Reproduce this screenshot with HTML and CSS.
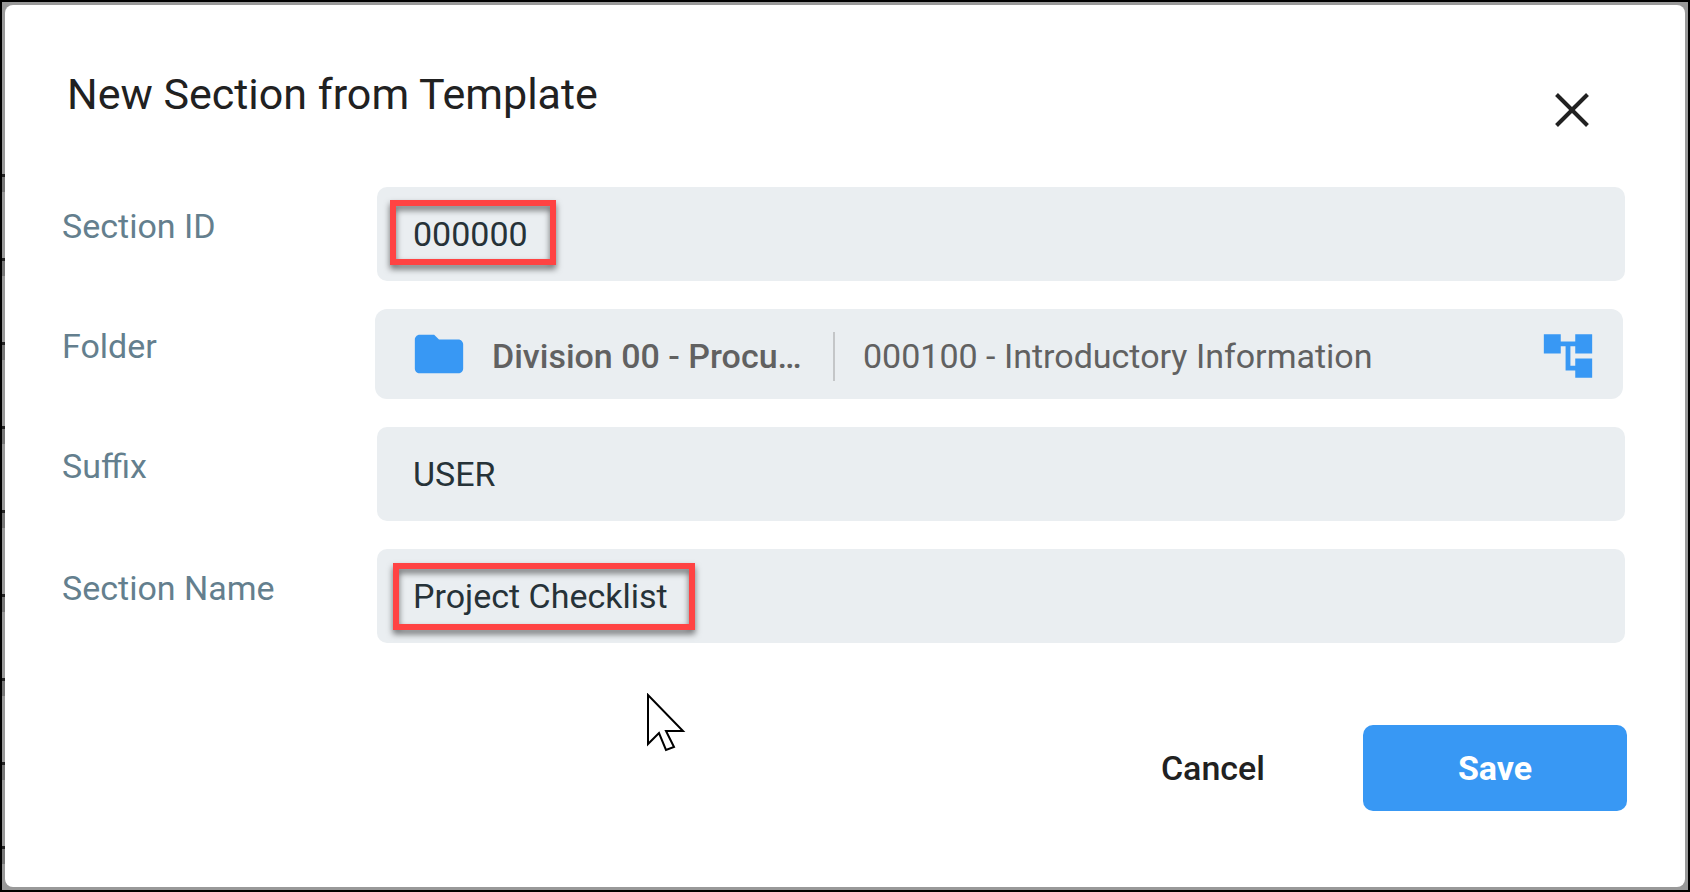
FILE: index.html
```html
<!DOCTYPE html>
<html lang="en">
<head>
<meta charset="utf-8">
<title>New Section from Template</title>
<link rel="stylesheet" href="styles.css">
</head>
<body>
<div class="backdrop">
  <form class="dialog" role="dialog" aria-labelledby="dialog-title">
    <header class="header">
      <h1 class="title" id="dialog-title">New Section from Template</h1>
      <button class="icon-button close" type="button" aria-label="Close">
        <svg class="icon" viewBox="0 0 24 24"><path d="M19 6.19 17.81 5 12 10.81 6.19 5 5 6.19 10.81 12 5 17.81 6.19 19 12 13.19 17.81 19 19 17.81 13.19 12z"/></svg>
      </button>
    </header>

    <div class="rows">
      <div class="row">
        <label class="label" for="section-id">Section ID</label>
        <div class="control">
          <input class="field" id="section-id" type="text" value="000000">
          <span class="highlight highlight-id"></span>
        </div>
      </div>
      <div class="row row-folder">
        <span class="label" id="folder-label">Folder</span>
        <div class="folder" role="group" aria-labelledby="folder-label">
          <svg class="icon accent folder-icon" viewBox="0 0 24 24"><path d="M10 4H4c-1.1 0-2 .9-2 2v12c0 1.1.9 2 2 2h16c1.1 0 2-.9 2-2V8c0-1.1-.9-2-2-2h-8z"/></svg>
          <span class="division">Division 00 - Procu…</span>
          <span class="divider"></span>
          <span class="subfolder">000100 - Introductory Information</span>
          <button class="icon-button accent" type="button" aria-label="Choose folder">
            <svg class="icon" viewBox="0 0 24 24"><path d="M22 11V3h-7v3H9V3H2v8h7V8h2v10h4v3h7v-8h-7v3h-2V8h2v3z"/></svg>
          </button>
        </div>
      </div>
      <div class="row">
        <label class="label" for="suffix">Suffix</label>
        <div class="control">
          <input class="field" id="suffix" type="text" value="USER">
        </div>
      </div>
      <div class="row">
        <label class="label" for="section-name">Section Name</label>
        <div class="control">
          <input class="field" id="section-name" type="text" value="Project Checklist">
          <span class="highlight highlight-name"></span>
        </div>
      </div>
    </div>

    <footer class="actions">
      <button class="button" type="button">Cancel</button>
      <button class="button button-primary" type="submit">Save</button>
    </footer>

    <svg class="pointer" viewBox="0 0 40 60"><path d="M2 2v49l11-11 7 17 8-3-8-16h17z"/></svg>
  </form>
</div>
</body>
</html>
```
FILE: styles.css
```css
* {
  box-sizing: border-box;
}

body {
  margin: 0;
  font-family: Roboto, "Liberation Sans", sans-serif;
  font-size: 34px;
  line-height: 40px;
  color: #212121;
}

.backdrop {
  display: flex;
  min-height: 100vh;
  padding: 3px;
  border: 2px solid #000;
  background:
    repeating-linear-gradient(#222 0 3px, #777 3px 18px, transparent 18px 84px) 0 172px / 3px 690px no-repeat,
    #999;
}

.dialog {
  position: relative;
  flex: 1;
  padding: 64px 60px 48px 57px;
  border-radius: 8px;
  background: #fff;
}

.header {
  display: flex;
  justify-content: space-between;
  padding: 0 24px 0 5px;
}

.title {
  margin: 0;
  font-size: 43px;
  font-weight: 400;
  line-height: 50px;
}

.icon {
  display: block;
  flex: none;
  width: 58px;
  height: 58px;
  fill: currentColor;
}

.icon-button {
  padding: 0;
  border: 0;
  background: none;
  color: inherit;
}

.close {
  margin-top: 12px;
}

.accent {
  color: #3898f4;
}

.rows {
  display: flex;
  flex-direction: column;
  gap: 28px;
  margin-top: 48px;
}

.row {
  display: grid;
  grid-template-columns: 315px 1fr;
  align-items: center;
}

.row-folder {
  grid-template-columns: 313px 1fr;
  margin-right: 2px;
}

.label {
  padding-bottom: 16px;
  color: #647f8e;
}

.control {
  position: relative;
}

.field {
  display: block;
  width: 100%;
  height: 94px;
  padding: 0 36px;
  border: 0;
  border-radius: 10px;
  outline: 0;
  background: #eaeef1;
  color: #263238;
  font: inherit;
}

.highlight {
  position: absolute;
  border: 6px solid #ff4343;
  filter: drop-shadow(0 4px 3px rgb(0 0 0 / 55%));
  pointer-events: none;
}

.highlight-id {
  top: 13px;
  left: 13px;
  width: 166px;
  height: 65px;
}

.highlight-name {
  top: 14px;
  left: 16px;
  width: 302px;
  height: 67px;
}

.folder {
  display: flex;
  align-items: center;
  height: 90px;
  padding: 4px 26px 0 35px;
  border-radius: 12px;
  background: #eaeef1;
  color: #616161;
}

.folder-icon {
  margin-bottom: 4px;
}

.division {
  width: 341px;
  padding-left: 24px;
  overflow: hidden;
  font-weight: 500;
  text-overflow: ellipsis;
  white-space: nowrap;
}

.divider {
  width: 2px;
  height: 49px;
  margin: 0 28px 0 24px;
  background: #c4c6c8;
}

.subfolder {
  flex: 1;
}

.actions {
  display: flex;
  justify-content: flex-end;
  gap: 50px;
  margin: 82px -2px 0 0;
}

.button {
  height: 86px;
  padding: 0 48px;
  border: 0;
  border-radius: 10px;
  background: none;
  color: #212121;
  font: inherit;
  font-weight: 500;
}

.button-primary {
  width: 264px;
  background: #3898f4;
  color: #fff;
  font-weight: 700;
}

.pointer {
  position: absolute;
  top: 688px;
  left: 641px;
  width: 40px;
  height: 60px;
  fill: #fff;
  stroke: #000;
  stroke-width: 2;
}
```
